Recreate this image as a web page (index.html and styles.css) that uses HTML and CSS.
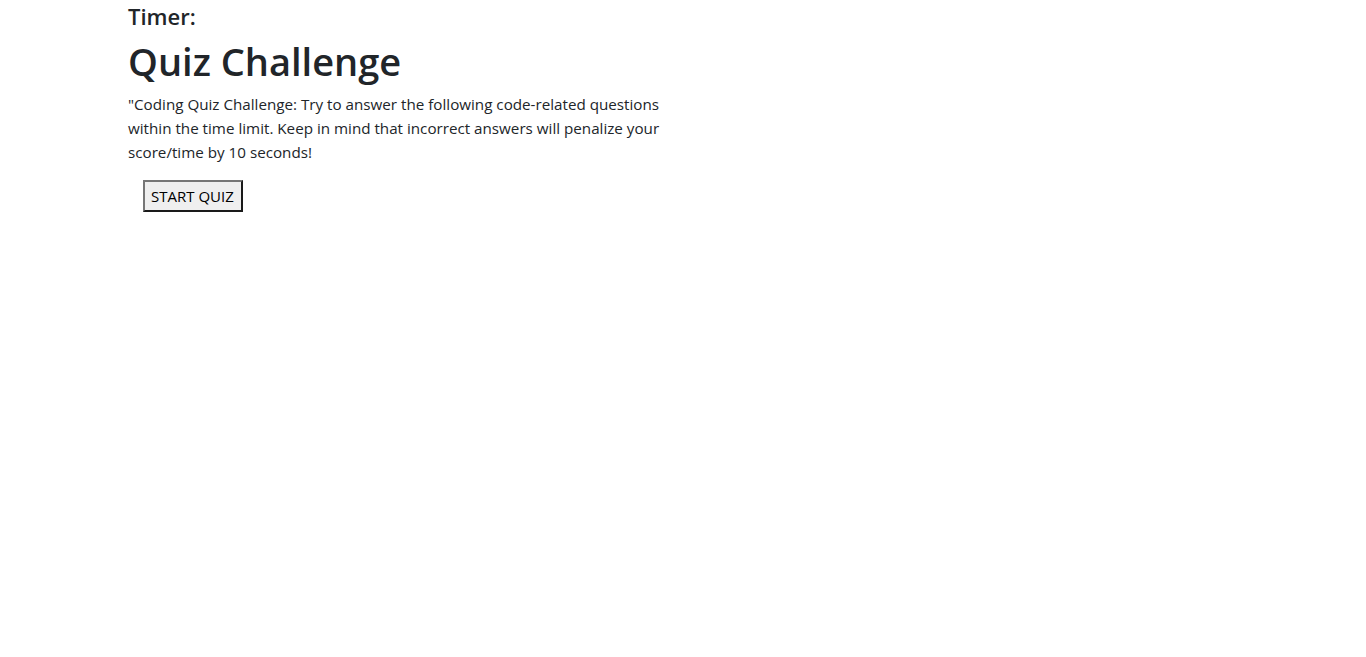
FILE: index.html
```html
<!DOCTYPE html>
<html lang="en">
<head>
<meta charset="utf-8">
<title>Quiz Challenge</title>
<link rel="stylesheet" href="styles.css">
</head>
<body>
<div class="container">
  <h4 class="timer">Timer: <span id="time"></span></h4>
  <div class="row">
    <div class="col">
      <h1 class="title">Quiz Challenge</h1>
      <p class="intro">"Coding Quiz Challenge: Try to answer the following code-related questions within the time limit. Keep in mind that incorrect answers will penalize your score/time by 10 seconds!</p>
      <button class="start-btn">START QUIZ</button>
    </div>
  </div>
</div>
</body>
</html>
```
FILE: styles.css
```css
*, *::before, *::after {
  box-sizing: border-box;
}
html, body {
  margin: 0;
  padding: 0;
  background: #fff;
}
body {
  font-family: "Open Sans", "Noto Sans", sans-serif;
  font-size: 16px;
  line-height: 1.5;
  color: #212529;
}
.container {
  max-width: 1140px;
  margin: 0 auto;
  padding: 0 15px;
}
.timer {
  margin: 0 0 8px;
  padding-top: 2px;
  font-size: 22px;
  font-weight: 600;
  line-height: 28px;
}
.col {
  width: 540px;
}
.title {
  margin: 0 0 8px;
  font-size: 38px;
  font-weight: 600;
  line-height: 46px;
}
.intro {
  margin: 0 0 16px;
  font-size: 15.2px;
  line-height: 24px;
}
.start-btn {
  margin-left: 15px;
  font-family: inherit;
  font-size: 15px;
  line-height: 22px;
  color: #000;
  background: #efefef;
  border-width: 2px;
  border-style: solid;
  border-color: #767676 #1a1a1a #1a1a1a #767676;
  padding: 3px 7px 3px 6px;
}
```
